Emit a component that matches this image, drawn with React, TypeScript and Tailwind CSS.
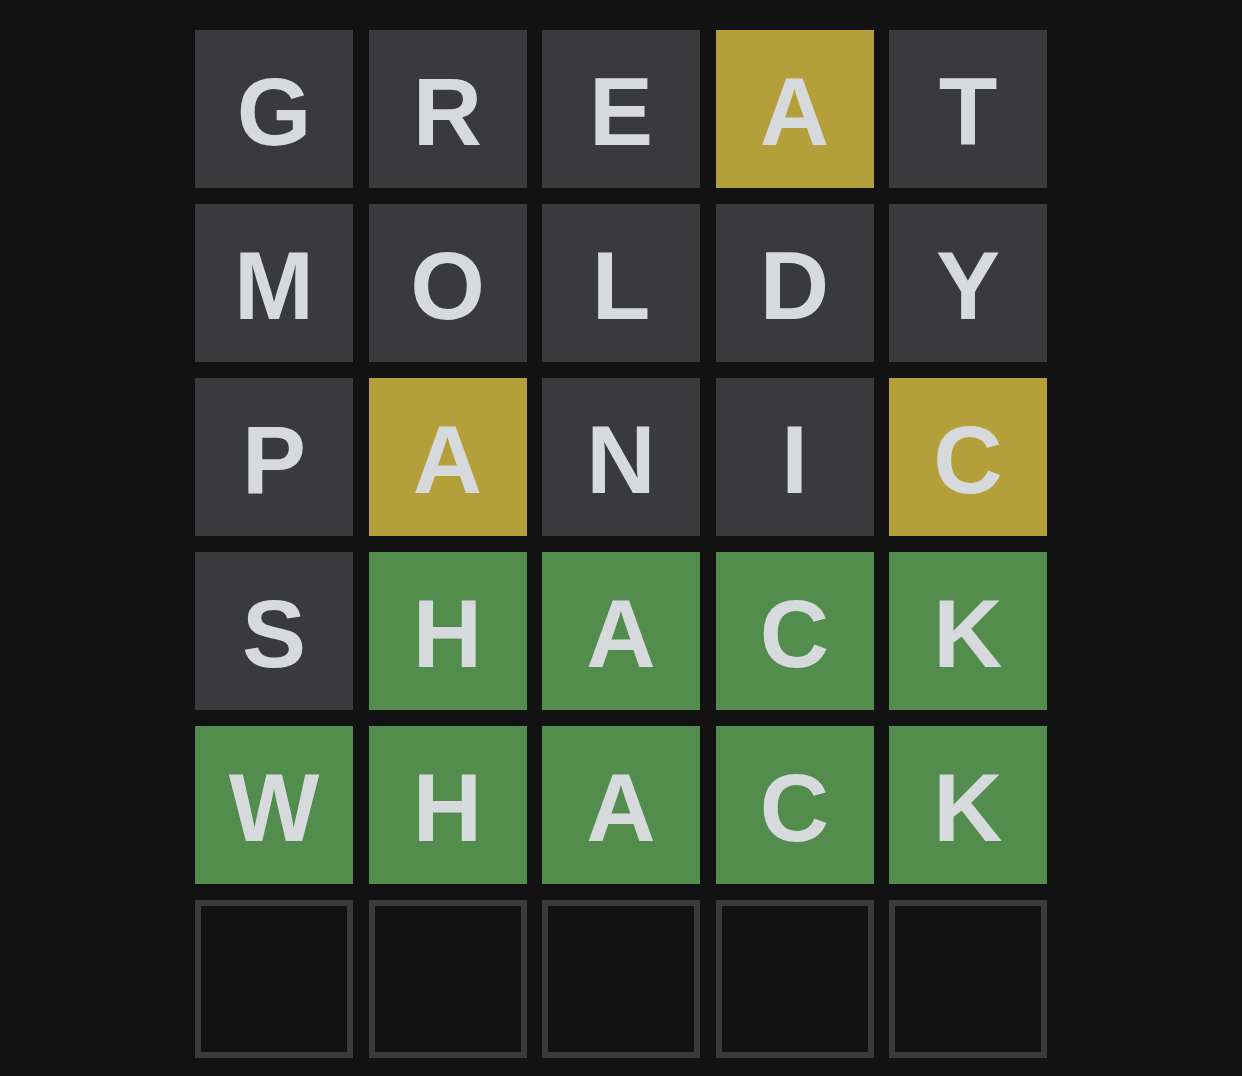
import React from "react";

type S = "a" | "p" | "c" | "e";
const rows: [string, S][][] = [
  [["G","a"],["R","a"],["E","a"],["A","p"],["T","a"]],
  [["M","a"],["O","a"],["L","a"],["D","a"],["Y","a"]],
  [["P","a"],["A","p"],["N","a"],["I","a"],["C","p"]],
  [["S","a"],["H","c"],["A","c"],["C","c"],["K","c"]],
  [["W","c"],["H","c"],["A","c"],["C","c"],["K","c"]],
  [["","e"],["","e"],["","e"],["","e"],["","e"]],
];

const cls: Record<S, string> = {
  a: "bg-[#3a3a3c]",
  p: "bg-[#b59f3b]",
  c: "bg-[#538d4e]",
  e: "border-[6px] border-[#3a3a3c]",
};

export default function App() {
  return (
    <div className="w-full h-[1076px] bg-[#121213] flex justify-center pt-[30px]" style={{ fontFamily: '"Liberation Sans", Arial, sans-serif' }}>
      <div className="w-[852px] grid grid-cols-5 gap-x-[15.5px] gap-y-[16px] content-start">
        {rows.flat().map(([l, s], i) => (
          <div key={i} className={`h-[158px] pt-[5px] flex items-center justify-center text-[96px] font-bold leading-none text-[#d7dadc] ${cls[s]}`}>
            {l}
          </div>
        ))}
      </div>
    </div>
  );
}
